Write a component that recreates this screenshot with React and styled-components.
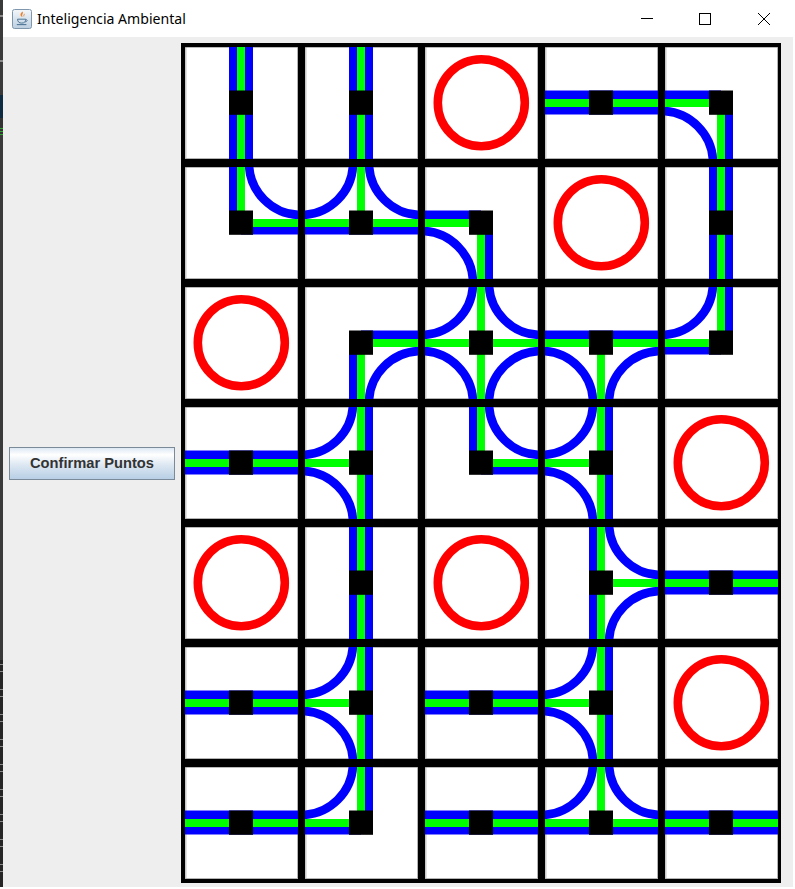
import React from "react";
import styled, { createGlobalStyle } from "styled-components";

const GlobalStyle = createGlobalStyle`
  html, body {
    margin: 0;
    padding: 0;
    background: #ffffff;
  }
`;

// each tile: the sides its road leaves by, "O" is a red ring
const BOARD = [
  ["NS", "NS", "O", "WE", "WS"],
  ["NE", "WNE", "WS", "O", "NS"],
  ["O", "ES", "NESW", "WES", "NW"],
  ["WE", "WNS", "NE", "WNS", "O"],
  ["O", "NS", "O", "NES", "WE"],
  ["WE", "WNS", "WE", "WNS", "O"],
  ["WE", "WN", "WE", "WNE", "WE"],
];

const ARCS = {
  NE: "M68 0A52 52 0 0 0 120 52",
  ES: "M120 68A52 52 0 0 0 68 120",
  SW: "M52 120A52 52 0 0 0 0 68",
  WN: "M0 52A52 52 0 0 0 52 0",
};

function Road({ sides }) {
  const has = (s) => sides.includes(s);
  const top = has("N") ? 0 : 60;
  const bottom = has("S") ? 120 : 60;
  const left = has("W") ? 0 : 60;
  const right = has("E") ? 120 : 60;

  return (
    <>
      {!has("W") && <rect x="48" y={top} width="8" height={bottom - top} fill="#0000ff" />}
      {!has("E") && <rect x="64" y={top} width="8" height={bottom - top} fill="#0000ff" />}
      {!has("N") && <rect x={left} y="47.5" width={right - left} height="8.5" fill="#0000ff" />}
      {!has("S") && <rect x={left} y="64" width={right - left} height="7.5" fill="#0000ff" />}
      {Object.keys(ARCS).map(
        (pair) =>
          has(pair[0]) &&
          has(pair[1]) && (
            <path key={pair} d={ARCS[pair]} fill="none" stroke="#0000ff" strokeWidth="8.6" />
          )
      )}
      <rect x="56" y={top} width="8" height={bottom - top} fill="#00ff00" />
      <rect x={left} y="56" width={right - left} height="8" fill="#00ff00" />
      <rect x="48" y="47.5" width="24" height="24.3" fill="#000000" />
    </>
  );
}

function Tile({ kind }) {
  return (
    <TileFrame>
      <TileArt viewBox="4 4 113 112">
        <rect x="4" y="4" width="113" height="112" fill="#ffffff" />
        <rect x="4" y="4" width="1.5" height="112" fill="#c8c8c8" />
        <rect x="4" y="115" width="113" height="1" fill="#b4b4b4" />
        <rect x="116" y="4" width="1" height="112" fill="#b4b4b4" />
        <rect x="4" y="4" width="113" height="0.6" fill="#8c8c8c" />
        {kind === "O" ? (
          <circle cx="60.3" cy="59.7" r="43.5" fill="none" stroke="#ff0000" strokeWidth="8.6" />
        ) : (
          <Road sides={kind} />
        )}
      </TileArt>
    </TileFrame>
  );
}

function JavaIcon() {
  return (
    <AppIcon viewBox="0 0 20 20">
      <defs>
        <linearGradient id="javaBg" x1="0" y1="0" x2="0" y2="1">
          <stop offset="0" stopColor="#f4f7fa" />
          <stop offset="1" stopColor="#bccfe0" />
        </linearGradient>
      </defs>
      <rect x="0.5" y="0.5" width="19" height="19" rx="2" fill="url(#javaBg)" stroke="#7f97ad" />
      <path d="M10.5 2.5c1.6 2-1.6 3 .2 5.6-2.6-1-3.2-3-.2-5.6zM12.6 4.6c.4 1.4-1 2-.4 3.4-1-.6-1.2-2 .4-3.4z" fill="#e9822c" />
      <path d="M5.5 10.2h8.4c-.2 2.6-1.6 3.9-4.2 3.9s-4-1.3-4.2-3.9z" fill="none" stroke="#4e7696" strokeWidth="1" />
      <path d="M13.8 10.7c1.8-.3 2.2 1.6-.6 2.3" fill="none" stroke="#4e7696" strokeWidth="0.9" />
      <path d="M4.8 15.6h9.6" stroke="#4e7696" strokeWidth="1.1" />
    </AppIcon>
  );
}

function App() {
  return (
    <Page>
      <GlobalStyle />
      <DesktopEdge />
      <Window>
        <TitleBar>
          <JavaIcon />
          <Title>Inteligencia Ambiental</Title>
          <Controls>
            <Control>
              <svg width="14" height="14" viewBox="0 0 14 14">
                <path d="M1 6.5H13" stroke="#000" strokeWidth="1" fill="none" />
              </svg>
            </Control>
            <Control>
              <svg width="14" height="14" viewBox="0 0 14 14">
                <rect x="1.5" y="1.5" width="11" height="11" stroke="#000" strokeWidth="1" fill="none" />
              </svg>
            </Control>
            <Control>
              <svg width="14" height="14" viewBox="0 0 14 14">
                <path d="M1 1L13 13M13 1L1 13" stroke="#000" strokeWidth="1" fill="none" />
              </svg>
            </Control>
          </Controls>
        </TitleBar>
        <Content>
          <SidePanel>
            <ConfirmButton>Confirmar Puntos</ConfirmButton>
          </SidePanel>
          <Board>
            {BOARD.flat().map((kind, i) => (
              <Tile key={i} kind={kind} />
            ))}
          </Board>
        </Content>
      </Window>
    </Page>
  );
}

export default App;

const Page = styled.div`
  display: flex;
  width: 795px;
  height: 889px;
  overflow: hidden;
  background: #ffffff;
`;

const DesktopEdge = styled.div`
  width: 3px;
  height: 887px;
  flex-shrink: 0;
  background:
    repeating-linear-gradient(
        to bottom,
        #8a8a8a 0,
        #8a8a8a 1px,
        transparent 1px,
        transparent 7px,
        #8a8a8a 7px,
        #8a8a8a 8px,
        transparent 8px,
        transparent 25px
      )
      0 664px / 3px 223px no-repeat,
    linear-gradient(
      to bottom,
      #3a3a3a 0,
      #3a3a3a 15px,
      #8a8a8a 15px,
      #8a8a8a 17px,
      #3a3a3a 17px,
      #3a3a3a 60px,
      #8a8a8a 60px,
      #8a8a8a 62px,
      #3a3a3a 62px,
      #3a3a3a 95px,
      #0f2b42 95px,
      #0f2b42 118px,
      #333333 118px,
      #333333 128px,
      #2fa82f 128px,
      #2fa82f 129px,
      #333333 129px,
      #333333 131px,
      #2fa82f 131px,
      #2fa82f 132px,
      #333333 132px,
      #333333 134px,
      #2fa82f 134px,
      #2fa82f 135px,
      #3a3a3a 135px,
      #3a3a3a 660px,
      #262626 660px,
      #262626 887px
    );
`;

const Window = styled.div`
  width: 790px;
  height: 887px;
  display: flex;
  flex-direction: column;
`;

const TitleBar = styled.div`
  height: 37px;
  display: flex;
  align-items: center;
  padding-left: 9px;
  background: #ffffff;
`;

const AppIcon = styled.svg`
  width: 20px;
  height: 20px;
  margin-right: 5px;
  flex-shrink: 0;
`;

const Title = styled.span`
  font-family: "Noto Sans", sans-serif;
  font-size: 14.1px;
  color: #000000;
  white-space: nowrap;
`;

const Controls = styled.div`
  margin-left: auto;
  display: flex;
`;

const Control = styled.div`
  width: 58.5px;
  height: 37px;
  display: flex;
  align-items: center;
  justify-content: center;
`;

const Content = styled.div`
  flex: 1;
  display: flex;
  background: #eeeeee;
`;

const SidePanel = styled.div`
  width: 178px;
  flex-shrink: 0;
  display: flex;
  align-items: center;
  padding: 6px 6px 4px;
  box-sizing: border-box;
`;

const ConfirmButton = styled.button`
  width: 166px;
  height: 33px;
  padding: 0;
  box-sizing: border-box;
  border: 1px solid #7a8a99;
  background: linear-gradient(to bottom, #dde8f3 0%, #ffffff 22%, #dce7f2 55%, #b8cfe5 100%);
  font-family: "Liberation Sans", Arial, sans-serif;
  font-size: 14.7px;
  font-weight: bold;
  color: #333333;
`;

const Board = styled.div`
  display: grid;
  grid-template-columns: repeat(5, 120px);
  grid-auto-rows: 120px;
  padding-top: 6px;
`;

const TileFrame = styled.div`
  box-sizing: border-box;
  width: 120px;
  height: 120px;
  border-style: solid;
  border-color: #000000;
  border-width: 4px 3px 4px 4px;
`;

const TileArt = styled.svg`
  display: block;
  width: 113px;
  height: 112px;
`;
